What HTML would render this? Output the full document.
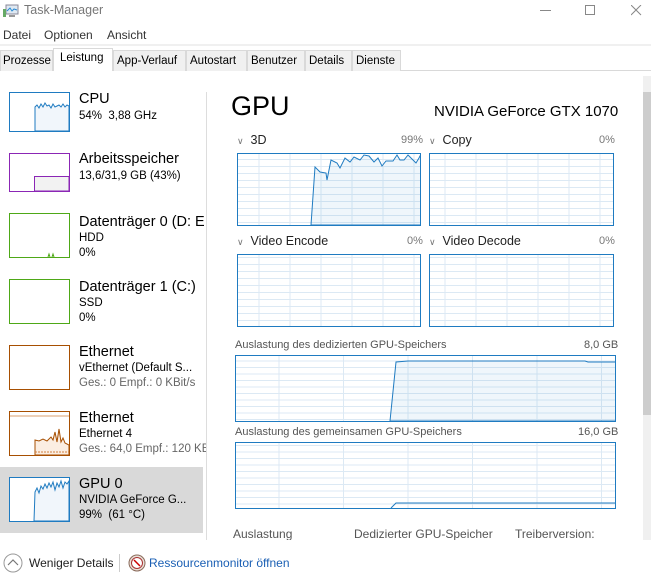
<!DOCTYPE html>
<html><head><meta charset="utf-8"><style>
*{margin:0;padding:0;box-sizing:border-box}
body{width:651px;height:582px;background:#fff;font-family:"Liberation Sans","DejaVu Sans",sans-serif;position:relative;overflow:hidden;color:#000}
.a{position:absolute;white-space:nowrap}
.tab{position:absolute;top:50px;height:21px;border:1px solid #d9d9d9;border-bottom:none;background:#f0f0f0;font-size:11.5px;padding:4px 0 0 3px}
.thumb{position:absolute;left:9px;width:61px;height:45px;border-width:1px;border-style:solid}
.nm{position:absolute;left:79px;font-size:14.5px;width:125px;overflow:hidden;white-space:nowrap}
.sb{position:absolute;left:79px;font-size:11.5px;white-space:nowrap}
.g{color:#666}
.lbl{font-size:12.5px;color:#222}
.pct{font-size:11px;color:#777}
</style></head><body>
<svg class="a" style="left:3px;top:4px" width="16" height="14"><rect x="3" y="1" width="12" height="9" fill="#dfe9f2" stroke="#889" stroke-width="1"/><polyline points="4,7 7,4 9,7 11,5 14,6" fill="none" stroke="#2a8ad4"/><rect x="0" y="5" width="3" height="8" fill="#6a6"/><rect x="6" y="11" width="6" height="2" fill="#999"/></svg>
<div class="a" style="left:24px;top:3px;font-size:12.5px;color:#777">Task-Manager</div>
<div class="a" style="left:540px;top:10px;width:11px;height:1px;background:#888"></div>
<div class="a" style="left:585px;top:5px;width:10px;height:10px;border:1px solid #888"></div>
<svg class="a" style="left:631px;top:5px" width="11" height="11"><path d="M0 0L10 10M10 0L0 10" stroke="#888" stroke-width="1"/></svg>
<div class="a" style="left:3px;top:28px;font-size:12px;color:#333">Datei</div>
<div class="a" style="left:44px;top:28px;font-size:12px;color:#333">Optionen</div>
<div class="a" style="left:107px;top:28px;font-size:12px;color:#333">Ansicht</div>
<div class="a" style="left:0;top:44px;width:651px;height:2px;background:#f0f0f0"></div>
<div class="a" style="left:0;top:70px;width:651px;height:1px;background:#d9d9d9"></div>
<div class="tab" style="left:0;width:53px;padding-left:2px">Prozesse</div>
<div class="tab" style="left:53px;top:48px;height:23px;width:60px;background:#fff;padding:3px 0 0 6px">Leistung</div>
<div class="tab" style="left:113px;width:73px">App-Verlauf</div>
<div class="tab" style="left:186px;width:61px">Autostart</div>
<div class="tab" style="left:247px;width:58px">Benutzer</div>
<div class="tab" style="left:305px;width:47px">Details</div>
<div class="tab" style="left:352px;width:49px">Dienste</div>
<div class="a" style="left:206px;top:92px;width:1px;height:448px;background:#ddd"></div>
<div class="a" style="left:0;top:467px;width:203px;height:66px;background:#d9d9d9"></div>

<div class="thumb" style="top:92px;height:40px;border-color:#1f7bc1"><svg width="59" height="38" style="display:block"><path d="M25 38L25 14L27 12L29 15L31 11L33 14L35 10L37 13L39 12L41 15L43 11L45 14L47 13L49 12L51 14L53 11L55 14L57 12L59 13L59 38Z" fill="#f1f6fb" stroke="#1f7bc1" stroke-width="1"/></svg></div>
<div class="nm" style="top:91px">CPU</div>
<div class="sb" style="top:110px">54%&nbsp; 3,88 GHz</div>

<div class="thumb" style="top:153px;height:39px;border-color:#8b26b5"><svg width="59" height="37" style="display:block"><path d="M24.5 37L24.5 22.5L59 22.5L59 37Z" fill="#f2f2f2" stroke="#8b26b5" stroke-width="1"/></svg></div>
<div class="nm" style="top:151px">Arbeitsspeicher</div>
<div class="sb" style="top:170px">13,6/31,9 GB (43%)</div>

<div class="thumb" style="top:213px;border-color:#4ea817"><svg width="59" height="43" style="display:block"><path d="M38 43L39 40L40 43M42 43L43 40L44 43" stroke="#4ea817" fill="none"/></svg></div>
<div class="nm" style="top:214px">Datenträger 0 (D: E</div>
<div class="sb" style="top:232px">HDD</div>
<div class="sb" style="top:247px">0%</div>

<div class="thumb" style="top:279px;border-color:#4ea817"></div>
<div class="nm" style="top:279px">Datenträger 1 (C:)</div>
<div class="sb" style="top:297px">SSD</div>
<div class="sb" style="top:312px">0%</div>

<div class="thumb" style="top:345px;border-color:#a74f01"></div>
<div class="nm" style="top:344px">Ethernet</div>
<div class="sb" style="top:362px">vEthernet (Default S...</div>
<div class="sb g" style="top:377px">Ges.: 0 Empf.: 0 KBit/s</div>

<div class="thumb" style="top:411px;border-color:#a74f01"><svg width="59" height="43" style="display:block"><line x1="0" y1="4" x2="59" y2="4" stroke="#d9a070"/><path d="M25 43L25 28L29 29L33 27L37 29L41 25L43 28L45 20L47 30L49 17L51 30L53 26L55 31L59 33L59 43Z" fill="#fbeee2" stroke="#a74f01"/><path d="M25 40L59 40" stroke="#d08040" stroke-dasharray="2 1"/></svg></div>
<div class="nm" style="top:410px">Ethernet</div>
<div class="sb" style="top:428px">Ethernet 4</div>
<div class="sb g" style="top:443px;width:127px;overflow:hidden">Ges.: 64,0 Empf.: 120 KB</div>

<div class="thumb" style="top:477px;border-color:#1f7bc1;background:#fff"><svg width="59" height="43" style="display:block"><path d="M24 43L25 14L27 10L29 15L31 8L33 11L35 6L37 10L39 5L41 9L43 4L45 12L47 5L49 9L51 3L53 10L55 4L57 6L59 3L59 43Z" fill="#f1f6fb" stroke="#1f7bc1"/></svg></div>
<div class="nm" style="top:476px">GPU 0</div>
<div class="sb" style="top:494px">NVIDIA GeForce G...</div>
<div class="sb" style="top:509px">99%&nbsp; (61 °C)</div>

<div class="a" style="left:231px;top:91px;font-size:27px">GPU</div>
<div class="a" style="left:434px;top:103px;font-size:15px">NVIDIA GeForce GTX 1070</div>

<div class="a lbl" style="left:237px;top:133px"><span style="font-size:9px;color:#777">&#x2228;</span>&nbsp; 3D</div>
<div class="a pct" style="left:401px;top:134px">99%</div>
<div class="a lbl" style="left:429px;top:133px"><span style="font-size:9px;color:#777">&#x2228;</span>&nbsp; Copy</div>
<div class="a pct" style="left:599px;top:134px">0%</div>
<div class="a lbl" style="left:237px;top:234px"><span style="font-size:9px;color:#777">&#x2228;</span>&nbsp; Video Encode</div>
<div class="a pct" style="left:407px;top:235px">0%</div>
<div class="a lbl" style="left:429px;top:234px"><span style="font-size:9px;color:#777">&#x2228;</span>&nbsp; Video Decode</div>
<div class="a pct" style="left:599px;top:235px">0%</div>

<svg class="a" style="left:0;top:0" width="651" height="582">
<defs>
<pattern id="gs" x="237" y="153" width="31" height="7" patternUnits="userSpaceOnUse"><path d="M22 0V7M0 6.5H31" stroke="#dce9f4" stroke-width="1" fill="none"/></pattern>
<pattern id="gb" x="235" y="355" width="64.5" height="6.5" patternUnits="userSpaceOnUse"><path d="M44 0V7M0 6H65" stroke="#dce9f4" stroke-width="1" fill="none"/></pattern>
</defs>
<rect x="237.5" y="153.5" width="183" height="72" fill="url(#gs)" stroke="#1f7bc1"/>
<path d="M311 225L315 167L320 172L326 173L327 180L331 160L337 163L340 168L345 158L350 162L354 157L360 160L364 155L369 156L374 162L378 158L382 166L386 161L390 161L393 161L397 155L400 160L404 160L408 155L413 160L416 163L419 158L420.5 155L420.5 225Z" fill="#1f7bc1" fill-opacity="0.07" stroke="#1f7bc1"/>
<rect x="429.5" y="153.5" width="184" height="72" fill="url(#gs)" stroke="#1f7bc1"/>
<rect x="237.5" y="254.5" width="183" height="72" fill="url(#gs)" stroke="#1f7bc1"/>
<rect x="429.5" y="254.5" width="184" height="72" fill="url(#gs)" stroke="#1f7bc1"/>
<rect x="235.5" y="355.5" width="380" height="66" fill="url(#gb)" stroke="#1f7bc1"/>
<path d="M390 421L396 362L408 361L585 361L588 362L615.5 362L615.5 421Z" fill="#1f7bc1" fill-opacity="0.07" stroke="#1f7bc1"/>
<rect x="235.5" y="442.5" width="380" height="66" fill="url(#gb)" stroke="#1f7bc1"/>
<path d="M391 508L396 503L615.5 503" fill="none" stroke="#1f7bc1"/>
</svg>

<div class="a" style="left:235px;top:339px;font-size:11px;color:#555">Auslastung des dedizierten GPU-Speichers</div>
<div class="a" style="left:584px;top:339px;font-size:11px;color:#555">8,0 GB</div>
<div class="a" style="left:235px;top:426px;font-size:11px;color:#555">Auslastung des gemeinsamen GPU-Speichers</div>
<div class="a" style="left:578px;top:426px;font-size:11px;color:#555">16,0 GB</div>

<div class="a" style="left:233px;top:527px;height:13px;overflow:hidden;font-size:12px;color:#555">Auslastung</div>
<div class="a" style="left:354px;top:527px;height:13px;overflow:hidden;font-size:12px;color:#555">Dedizierter GPU-Speicher</div>
<div class="a" style="left:515px;top:527px;height:13px;overflow:hidden;font-size:12px;color:#555">Treiberversion:</div>

<div class="a" style="left:643px;top:76px;width:8px;height:464px;background:#f0f0f0"></div>
<div class="a" style="left:643px;top:92px;width:8px;height:323px;background:#cdcdcd"></div>

<svg class="a" style="left:3px;top:553px" width="20" height="20"><circle cx="10" cy="10" r="9" fill="#fff" stroke="#999"/><path d="M5 12L10 7L15 12" fill="none" stroke="#777" stroke-width="1.2"/></svg>
<div class="a" style="left:29px;top:556px;font-size:12px;color:#222">Weniger Details</div>
<div class="a" style="left:119px;top:554px;width:1px;height:18px;background:#ccc"></div>
<svg class="a" style="left:128px;top:554px" width="18" height="18"><circle cx="9" cy="9" r="8" fill="#e8e0d8" stroke="#8a6a5a"/><circle cx="9" cy="9" r="5.5" fill="#fff" stroke="#a33"/><path d="M6 6L12 12" stroke="#c00" stroke-width="1.5"/></svg>
<div class="a" style="left:149px;top:556px;font-size:12px;color:#1a5fb4">Ressourcenmonitor öffnen</div>
</body></html>
